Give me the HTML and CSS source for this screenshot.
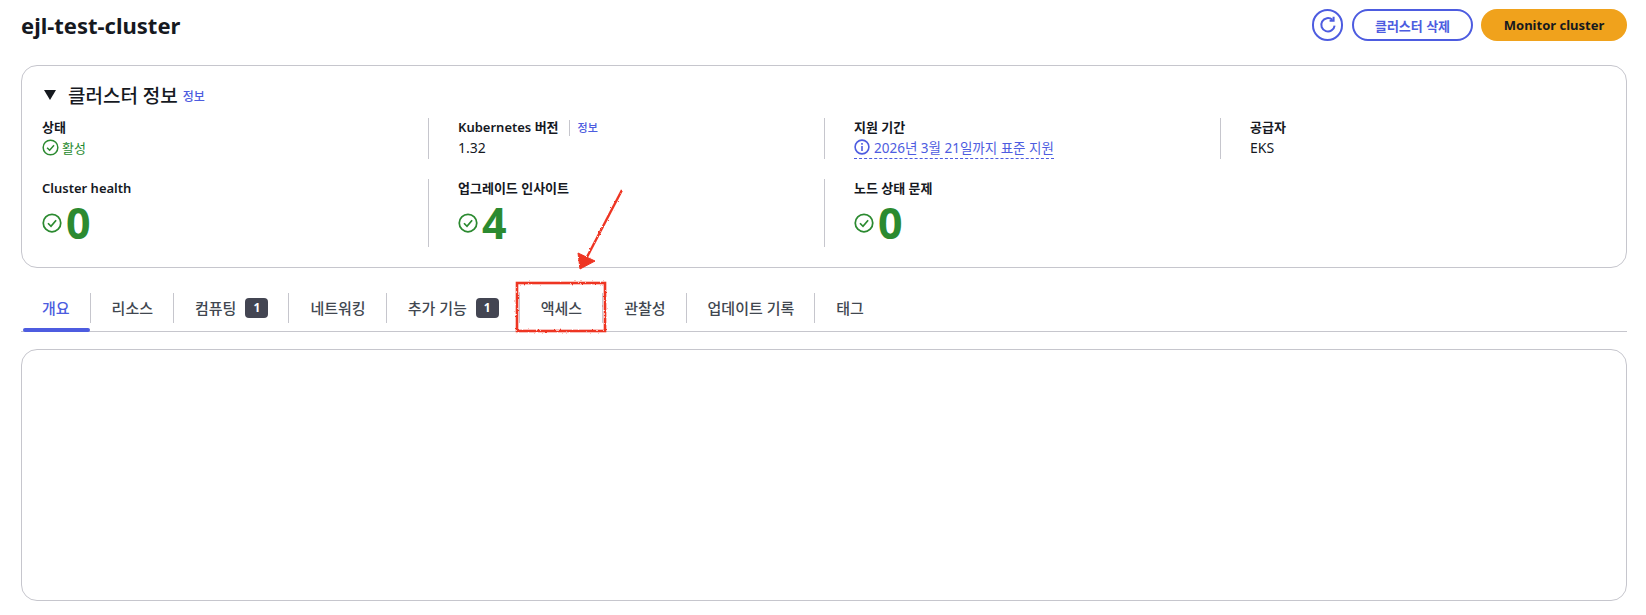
FILE: index.html
```html
<!DOCTYPE html>
<html lang="ko">
  <head>
    <meta charset="UTF-8" />
    <meta name="viewport" content="width=device-width, initial-scale=1.0" />
    <title>ejl-test-cluster</title>
    <link rel="stylesheet" href="styles.css">
  </head>
  <body>
    <!-- Page header -->
    <div class="page-header">
      <h1>ejl-test-cluster</h1>
      <div class="actions">
        <button class="btn btn-icon" aria-label="새로 고침">
          <svg width="18" height="18" viewBox="0 0 18 18" fill="none" stroke="currentColor" stroke-width="2">
            <path d="M15.6 9.6A6.7 6.7 0 1 1 13.4 3.8" />
            <path d="M14.6 0.8V4.8H10.6" stroke-linejoin="miter" />
          </svg>
        </button>
        <button class="btn btn-normal">클러스터 삭제</button>
        <button class="btn btn-primary">Monitor cluster</button>
      </div>
    </div>

    <!-- Cluster info card -->
    <div class="card info-card">
      <div class="card-title">
        <span class="caret"></span>
        <h2>클러스터 정보</h2>
        <a class="info-link">정보</a>
      </div>
      <div class="info-row">
        <div class="info-col">
          <div class="label">상태</div>
          <div class="value status-ok">
            <svg class="check" width="17" height="17" viewBox="0 0 16 16"><circle cx="8" cy="8" r="6.9" /><path d="M4.8 8.2 7.2 10.6 11.3 5.8" /></svg>
            활성
          </div>
        </div>
        <div class="info-col">
          <div class="label">Kubernetes 버전<a class="info-link label-link">정보</a></div>
          <div class="value">1.32</div>
        </div>
        <div class="info-col">
          <div class="label">지원 기간</div>
          <div class="value">
            <a class="support-link">
              <svg width="16" height="16" viewBox="0 0 16 16" fill="none" stroke="currentColor" stroke-width="1.6"><circle cx="8" cy="8" r="6.9" /><path d="M8 7V12" /><path d="M8 4V5.8" /></svg>
              2026년 3월 21일까지 표준 지원
            </a>
          </div>
        </div>
        <div class="info-col">
          <div class="label">공급자</div>
          <div class="value">EKS</div>
        </div>
      </div>
      <div class="info-row count-row">
        <div class="info-col">
          <div class="label">Cluster health</div>
          <div class="count">
            <svg class="check" width="20" height="20" viewBox="0 0 16 16"><circle cx="8" cy="8" r="7" /><path d="M4.8 8.2 7.2 10.6 11.3 5.8" /></svg>
            <span>0</span>
          </div>
        </div>
        <div class="info-col">
          <div class="label">업그레이드 인사이트</div>
          <div class="count">
            <svg class="check" width="20" height="20" viewBox="0 0 16 16"><circle cx="8" cy="8" r="7" /><path d="M4.8 8.2 7.2 10.6 11.3 5.8" /></svg>
            <span>4</span>
          </div>
        </div>
        <div class="info-col">
          <div class="label">노드 상태 문제</div>
          <div class="count">
            <svg class="check" width="20" height="20" viewBox="0 0 16 16"><circle cx="8" cy="8" r="7" /><path d="M4.8 8.2 7.2 10.6 11.3 5.8" /></svg>
            <span>0</span>
          </div>
        </div>
      </div>
    </div>

    <!-- Tabs -->
    <div class="tabs">
      <div class="tab active">개요</div>
      <div class="tab">리소스</div>
      <div class="tab">컴퓨팅<span class="badge">1</span></div>
      <div class="tab">네트워킹</div>
      <div class="tab">추가 기능<span class="badge">1</span></div>
      <div class="tab">액세스</div>
      <div class="tab">관찰성</div>
      <div class="tab">업데이트 기록</div>
      <div class="tab last">태그</div>
    </div>

    <div class="card content-card"></div>

    <!-- Red annotation drawn over the screenshot -->
    <svg class="annotation" width="1646" height="615" viewBox="0 0 1646 615" fill="none" stroke="#ee3524">
      <defs>
        <filter id="rough" x="-5%" y="-5%" width="110%" height="110%">
          <feTurbulence type="fractalNoise" baseFrequency="0.5" numOctaves="2" seed="4" />
          <feDisplacementMap in="SourceGraphic" scale="2.5" />
        </filter>
      </defs>
      <g filter="url(#rough)">
        <rect x="517" y="283" width="88" height="48" stroke-width="2.6" />
        <path d="M622 190 587 257" stroke-width="2.4" />
        <path d="M578 253 595 261 580 269Z" fill="#ee3524" stroke-width="1" />
      </g>
    </svg>
  </body>
</html>
```

FILE: styles.css
```css
body {
  margin: 0;
  background: #fff;
  color: #16191f;
  font-family: "Noto Sans", "Noto Sans CJK KR", sans-serif;
  font-size: 14px;
}

.page-header {
  display: flex;
  justify-content: space-between;
  align-items: center;
  height: 32px;
  padding: 9px 19px 0 21px;
}

h1 {
  margin: 0;
  font-size: 22px;
  font-weight: 700;
}

.actions {
  display: flex;
  gap: 8px;
}

.btn {
  box-sizing: border-box;
  height: 32px;
  border-radius: 16px;
  font-family: inherit;
  font-size: 13px;
  font-weight: 700;
  padding: 0;
}

.btn-icon {
  display: flex;
  align-items: center;
  justify-content: center;
  width: 31px;
  margin-right: 1px;
  background: #fff;
  border: 2px solid #4d5ce0;
  color: #4d5ce0;
}

.btn-normal {
  width: 121px;
  background: #fff;
  border: 2px solid #4d5ce0;
  color: #4d5ce0;
  font-weight: 600;
}

.btn-primary {
  width: 146px;
  background: #f0a21c;
  border: none;
  color: #16191f;
}

.card {
  box-sizing: border-box;
  margin: 0 19px 0 21px;
  background: #fff;
  border: 1px solid #c6c6cd;
  border-radius: 16px;
}

.info-card {
  height: 203px;
  margin-top: 24px;
  padding: 16px 0 0 20px;
}

.card-title {
  display: flex;
  align-items: center;
  height: 26px;
}

.caret {
  width: 0;
  height: 0;
  margin: 0 12px 0 2px;
  border-left: 6px solid transparent;
  border-right: 6px solid transparent;
  border-top: 10px solid #16191f;
}

h2 {
  margin: 0;
  font-size: 19px;
  font-weight: 500;
}

.info-link {
  color: #4d5ce0;
  font-size: 11px;
  font-weight: 500;
}

.card-title .info-link {
  margin: 2px 0 0 5px;
  font-size: 12px;
}

.info-row {
  display: grid;
  grid-template-columns: 386px 396px 396px 376px;
  margin-top: 10px;
}

.count-row {
  margin-top: 20px;
}

.info-col {
  box-sizing: border-box;
  min-height: 41px;
  border-left: 1px solid #c6c6cd;
  padding-left: 29px;
}

.info-col:first-child {
  border-left: none;
  padding-left: 0;
}

.count-row .info-col {
  height: 68px;
}

.label {
  display: flex;
  align-items: center;
  height: 19px;
  font-size: 13px;
  font-weight: 600;
  line-height: 19px;
}

.label-link {
  margin-left: 10px;
  padding-left: 8px;
  border-left: 1px solid #c6c6cd;
  line-height: 16px;
}

.value {
  display: flex;
  align-items: center;
  height: 21px;
  font-size: 14px;
}

.status-ok {
  gap: 3px;
  color: #1f8a2f;
  font-size: 13px;
}

.check {
  flex: none;
  fill: none;
  stroke: #2b8a30;
  stroke-width: 1.4;
}

.support-link {
  display: flex;
  align-items: center;
  gap: 4px;
  height: 21px;
  color: #4d5ce0;
  font-size: 13.5px;
  border-bottom: 1px dashed #4d5ce0;
}

.count {
  display: flex;
  align-items: center;
  gap: 4px;
  height: 48px;
  margin-top: 1px;
  color: #2b8a30;
  font-size: 43px;
  font-weight: 700;
  line-height: 48px;
}

.tabs {
  display: flex;
  box-sizing: border-box;
  height: 42px;
  margin: 22px 19px 0 21px;
  border-bottom: 1px solid #c6c6cd;
}

.tab {
  position: relative;
  display: flex;
  align-items: center;
  box-sizing: border-box;
  height: 30px;
  margin-top: 3px;
  padding: 0 20px 1px 21px;
  border-right: 1px solid #c6c6cd;
  color: #414750;
  font-size: 15px;
  font-weight: 500;
}

.tab.last {
  border-right: none;
}

.tab.active {
  color: #4d5ce0;
}

.tab.active::after {
  content: "";
  position: absolute;
  left: 2px;
  right: 0;
  top: 35px;
  height: 4px;
  border-radius: 2px;
  background: #4d5ce0;
}

.badge {
  display: flex;
  align-items: center;
  justify-content: center;
  width: 23px;
  height: 20px;
  margin-left: 9px;
  border-radius: 4px;
  background: #434552;
  color: #fff;
  font-size: 12px;
  font-weight: 700;
}

.content-card {
  height: 252px;
  margin-top: 17px;
}

.annotation {
  position: absolute;
  left: 0;
  top: 0;
  pointer-events: none;
}
```
